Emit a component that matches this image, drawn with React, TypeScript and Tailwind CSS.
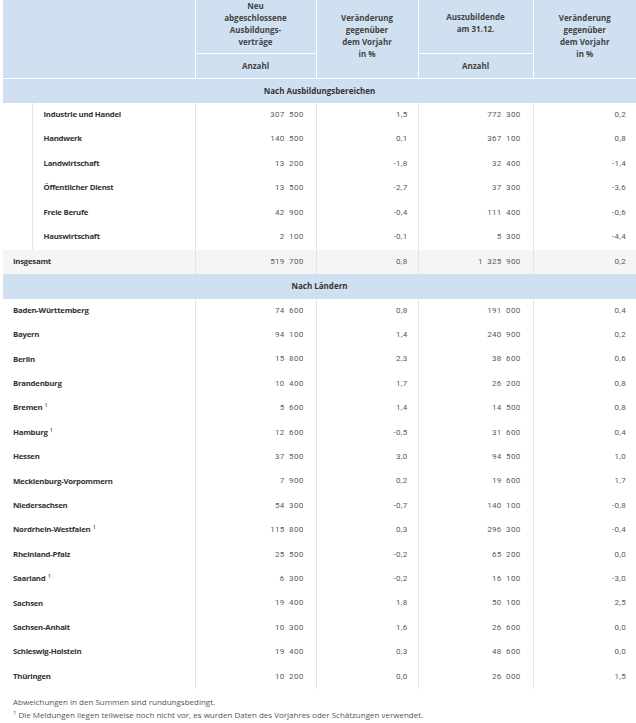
type Row = { name: string; fn?: boolean; a: string; b: string; c: string; d: string };

const bereiche: Row[] = [
  { name: "Industrie und Handel", a: "307 500", b: "1,5", c: "772 300", d: "0,2" },
  { name: "Handwerk", a: "140 500", b: "0,1", c: "367 100", d: "0,8" },
  { name: "Landwirtschaft", a: "13 200", b: "-1,8", c: "32 400", d: "-1,4" },
  { name: "Öffentlicher Dienst", a: "13 500", b: "-2,7", c: "37 300", d: "-3,6" },
  { name: "Freie Berufe", a: "42 900", b: "-0,4", c: "111 400", d: "-0,6" },
  { name: "Hauswirtschaft", a: "2 100", b: "-0,1", c: "5 300", d: "-4,4" },
];

const laender: Row[] = [
  { name: "Baden-Württemberg", a: "74 600", b: "0,8", c: "191 000", d: "0,4" },
  { name: "Bayern", a: "94 100", b: "1,4", c: "240 900", d: "0,2" },
  { name: "Berlin", a: "15 800", b: "2,3", c: "38 600", d: "0,6" },
  { name: "Brandenburg", a: "10 400", b: "1,7", c: "26 200", d: "0,8" },
  { name: "Bremen", fn: true, a: "5 600", b: "1,4", c: "14 500", d: "0,8" },
  { name: "Hamburg", fn: true, a: "12 600", b: "-0,5", c: "31 600", d: "0,4" },
  { name: "Hessen", a: "37 500", b: "3,0", c: "94 500", d: "1,0" },
  { name: "Mecklenburg-Vorpommern", a: "7 900", b: "0,2", c: "19 600", d: "1,7" },
  { name: "Niedersachsen", a: "54 300", b: "-0,7", c: "140 100", d: "-0,8" },
  { name: "Nordrhein-Westfalen", fn: true, a: "115 800", b: "0,3", c: "296 300", d: "-0,4" },
  { name: "Rheinland-Pfalz", a: "25 500", b: "-0,2", c: "65 200", d: "0,0" },
  { name: "Saarland", fn: true, a: "6 300", b: "-0,2", c: "16 100", d: "-3,0" },
  { name: "Sachsen", a: "19 400", b: "1,8", c: "50 100", d: "2,5" },
  { name: "Sachsen-Anhalt", a: "10 300", b: "1,6", c: "26 600", d: "0,0" },
  { name: "Schleswig-Holstein", a: "19 400", b: "0,3", c: "48 600", d: "0,0" },
  { name: "Thüringen", a: "10 200", b: "0,0", c: "26 000", d: "1,5" },
];

function Nums({ r }: { r: Row }) {
  // wider word spacing so the thousands gap is about one digit wide
  const cell =
    "align-middle text-right font-['Roboto',sans-serif] text-[8px] tabular-nums tracking-[0.3px] [word-spacing:2.2px] text-[#5a5a5a]";
  return (
    <>
      <td className={`${cell} border-r border-[#e4e4e4] pr-3`}>{r.a}</td>
      <td className={`${cell} border-r border-[#e4e4e4] pr-[10px]`}>{r.b}</td>
      <td className={`${cell} border-r border-[#e4e4e4] pr-3`}>{r.c}</td>
      <td className={`${cell} pr-[10px]`}>{r.d}</td>
    </>
  );
}

function Name({ r }: { r: Row }) {
  return (
    <>
      {r.name}
      {r.fn && <sup className="ml-[2px] text-[6px] font-semibold tracking-normal text-[#3d6fa6]">1</sup>}
    </>
  );
}

const nameCls = "text-[7.8px] font-bold tracking-[-0.25px] text-[#333]";

export default function App() {
  const head = "bg-[#cfe0f0] text-center text-[8px] font-bold leading-[12px] text-[#444]";
  return (
    <div className="min-h-screen bg-white font-['Open_Sans',sans-serif] text-[#333]">
      <table className="ml-[3px] w-[633px] table-fixed border-collapse">
        <colgroup>
          <col className="w-[29px]" />
          <col className="w-[163px]" />
          <col className="w-[121px]" />
          <col className="w-[102px]" />
          <col className="w-[115px]" />
          <col className="w-[103px]" />
        </colgroup>
        <thead>
          <tr className="h-[53px]">
            <th colSpan={2} rowSpan={2} className={`${head} border-r border-white`} />
            <th className={`${head} border-r border-b border-white pb-[5px] align-bottom`}>
              Neu
              <br />
              abgeschlossene
              <br />
              Ausbildungs-
              <br />
              verträge
            </th>
            <th rowSpan={2} className={`${head} border-r border-white pt-[12px] align-top`}>
              Veränderung
              <br />
              gegenüber
              <br />
              dem Vorjahr
              <br />
              in %
            </th>
            <th className={`${head} border-r border-b border-white pt-[11px] align-top`}>
              Auszubildende
              <br />
              am 31.12.
            </th>
            <th rowSpan={2} className={`${head} pt-[12px] align-top`}>
              Veränderung
              <br />
              gegenüber
              <br />
              dem Vorjahr
              <br />
              in %
            </th>
          </tr>
          <tr className="h-[25px]">
            <th className={`${head} border-r border-white align-middle`}>Anzahl</th>
            <th className={`${head} border-r border-white align-middle`}>Anzahl</th>
          </tr>
        </thead>
        <tbody>
          <tr className="h-[24px] border-t border-white bg-[#cfe0f0]">
            <td colSpan={6} className="text-center text-[8px] font-bold text-[#333]">
              Nach Ausbildungsbereichen
            </td>
          </tr>
          {bereiche.map((r) => (
            <tr key={r.name} className="h-[24.5px]">
              <td className="border-r border-[#e4e4e4]" />
              <td className={`border-r border-[#e4e4e4] pl-[11px] ${nameCls}`}>
                <Name r={r} />
              </td>
              <Nums r={r} />
            </tr>
          ))}
          <tr className="h-[24px] bg-[#f5f5f5]">
            <td colSpan={2} className={`border-r border-[#e4e4e4] pl-[10px] ${nameCls}`}>
              Insgesamt
            </td>
            <Nums r={{ name: "Insgesamt", a: "519 700", b: "0,8", c: "1 325 900", d: "0,2" }} />
          </tr>
          <tr className="h-[25px] bg-[#cfe0f0]">
            <td colSpan={6} className="text-center text-[8px] font-bold text-[#333]">
              Nach Ländern
            </td>
          </tr>
          {laender.map((r) => (
            <tr key={r.name} className="h-[24.4px]">
              <td colSpan={2} className={`border-r border-[#e4e4e4] pl-[10px] ${nameCls}`}>
                <Name r={r} />
              </td>
              <Nums r={r} />
            </tr>
          ))}
        </tbody>
      </table>
      <div className="mt-[6px] pl-[13px] text-[8px] leading-[13px] text-[#555]">
        <p>Abweichungen in den Summen sind rundungsbedingt.</p>
        <p>
          <sup className="mr-[2px] text-[6px]">1</sup>
          Die Meldungen liegen teilweise noch nicht vor, es wurden Daten des Vorjahres oder Schätzungen verwendet.
        </p>
      </div>
    </div>
  );
}
